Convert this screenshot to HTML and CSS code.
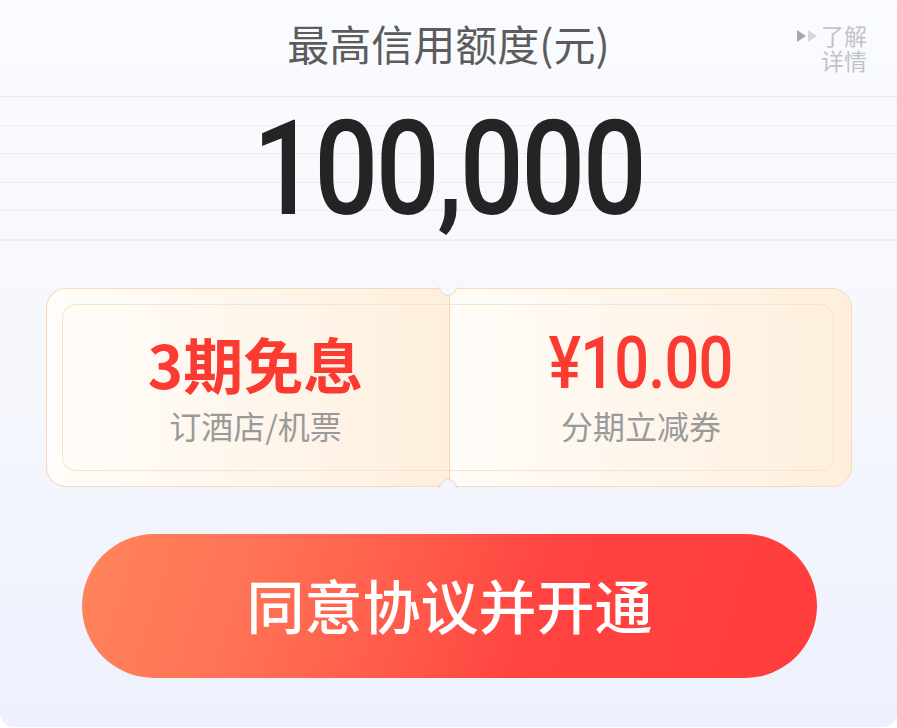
FILE: index.html
```html
<!DOCTYPE html>
<html lang="zh-CN">
<head>
  <meta charset="utf-8">
  <title>最高信用额度</title>
  <link rel="stylesheet" href="styles.css">
</head>
<body class="body">
  <div class="page">
    <div class="head">
      <div></div>
      <h1 class="title">最高信用额度(元)</h1>
      <a class="more" href="#">
        <span class="arrows"><i class="tri dark"></i><i class="tri light"></i></span>
        <span class="more-text">了解<br>详情</span>
      </a>
    </div>

    <div class="hero">
      <div class="amount">100,000</div>
    </div>

    <div class="ticket">
      <div class="half half-left">
        <div class="slot">
          <div class="big cjk">3期免息</div>
          <div class="sub">订酒店/机票</div>
        </div>
      </div>
      <div class="half half-right">
        <div class="slot">
          <div class="big num">¥10.00</div>
          <div class="sub">分期立减券</div>
        </div>
      </div>
    </div>

    <div class="action">
      <button class="btn">同意协议并开通</button>
    </div>
  </div>
</body>
</html>
```

FILE: styles.css
```css
html, body {
  margin: 0;
  background: #ffffff;
}

.body {
  font-family: "Noto Sans CJK SC", "Noto Sans", sans-serif;
}

.page {
  width: 897px;
  height: 727px;
  background: linear-gradient(180deg, #fafbfe 0%, #f5f7fd 55%, #edf1fd 100%);
  border-radius: 0 0 14px 14px;
  overflow: hidden;
}

/* titre */
.head {
  display: grid;
  grid-template-columns: 1fr auto 1fr;
  align-items: start;
  height: 96px;
}

.title {
  margin: 0;
  padding-top: 14px;
  font-size: 42px;
  line-height: 58px;
  font-weight: 400;
  color: #5c5c5c;
}

.more {
  justify-self: end;
  display: flex;
  align-items: flex-start;
  margin-right: 30px;
  margin-top: 23px;
  text-decoration: none;
}

.arrows {
  display: flex;
  gap: 2px;
  margin-top: 7px;
  margin-right: 4px;
}

.tri {
  width: 0;
  height: 0;
  border-top: 6px solid transparent;
  border-bottom: 6px solid transparent;
  border-left: 9px solid #a6a7ab;
}

.tri.light {
  border-left-color: #d5d6da;
}

.more-text {
  font-size: 23px;
  line-height: 25px;
  color: #c2c3c7;
}

/* montant */
.hero {
  height: 143px;
  border-top: 1px solid #e9ebf0;
  border-bottom: 1px solid #e9ebf0;
  background: repeating-linear-gradient(180deg, transparent 0, transparent 27.6px, #eceef3 27.6px, #eceef3 28.6px);
  display: flex;
  justify-content: center;
  align-items: center;
}

.amount {
  font-family: Roboto, "Liberation Sans", sans-serif;
  font-weight: 500;
  font-size: 131px;
  line-height: 1;
  letter-spacing: -3px;
  color: #242424;
  transform: scaleX(0.86);
  margin-top: 2px;
}

/* ticket */
.ticket {
  display: flex;
  width: 806px;
  height: 199px;
  margin: 47px auto 0;
  position: relative;
}

.ticket::before,
.ticket::after {
  content: "";
  position: absolute;
  left: 393px;
  width: 16px;
  height: 16px;
  border-radius: 50%;
  border: 1.5px solid;
  z-index: 2;
}

.ticket::before {
  top: -10px;
  background: #f8f9fe;
  border-color: transparent transparent #f9d5b0 #f9d5b0;
  transform: rotate(-45deg);
}

.ticket::after {
  bottom: -10px;
  background: #f2f5fd;
  border-color: #f9d5b0 #f9d5b0 transparent transparent;
  transform: rotate(-45deg);
}

.half {
  box-sizing: border-box;
  height: 100%;
  padding: 15px 0;
  border: 1.5px solid #f9d9b8;
}

.half-left {
  width: 403px;
  padding-left: 15px;
  border-right: none;
  border-radius: 20px 0 0 20px;
  background: linear-gradient(90deg, #fffdfa 0%, #fef5ea 60%, #feefdc 100%);
}

.half-right {
  width: 403px;
  padding-right: 17px;
  border-left: 1.5px solid #f9d9b8;
  border-radius: 0 20px 20px 0;
  background: linear-gradient(90deg, #fffcf8 0%, #fef5ea 55%, #feefdc 100%);
}

.slot {
  box-sizing: border-box;
  height: 100%;
  display: flex;
  flex-direction: column;
  align-items: center;
  justify-content: center;
  border: 1px solid #fbe3c8;
}

.half-left .slot {
  border-right: none;
  border-radius: 14px 0 0 14px;
}

.half-right .slot {
  border-left: none;
  border-radius: 0 14px 14px 0;
}

.big {
  color: #fb3b31;
  font-weight: 700;
  line-height: 70px;
}

.big.cjk {
  font-size: 60px;
}

.big.num {
  font-family: Roboto, "Liberation Sans", sans-serif;
  font-weight: 500;
  font-size: 73px;
  letter-spacing: -1px;
  transform: scaleX(0.84);
}

.sub {
  font-size: 32px;
  line-height: 46px;
  color: #9a9a9a;
  margin-top: 4px;
}

/* bouton */
.action {
  display: flex;
  justify-content: center;
  margin-top: 47px;
}

.btn {
  width: 735px;
  height: 144px;
  border: none;
  border-radius: 72px;
  margin-left: 2px;
  background: linear-gradient(108deg, #ff845b 0%, #ff7456 22%, #ff5a4a 45%, #ff4340 62%, #ff3d3c 100%);
  color: #ffffff;
  font-family: "Noto Sans CJK SC", sans-serif;
  font-size: 58px;
  font-weight: 500;
  padding: 0;
  padding-bottom: 4px;
}
```
